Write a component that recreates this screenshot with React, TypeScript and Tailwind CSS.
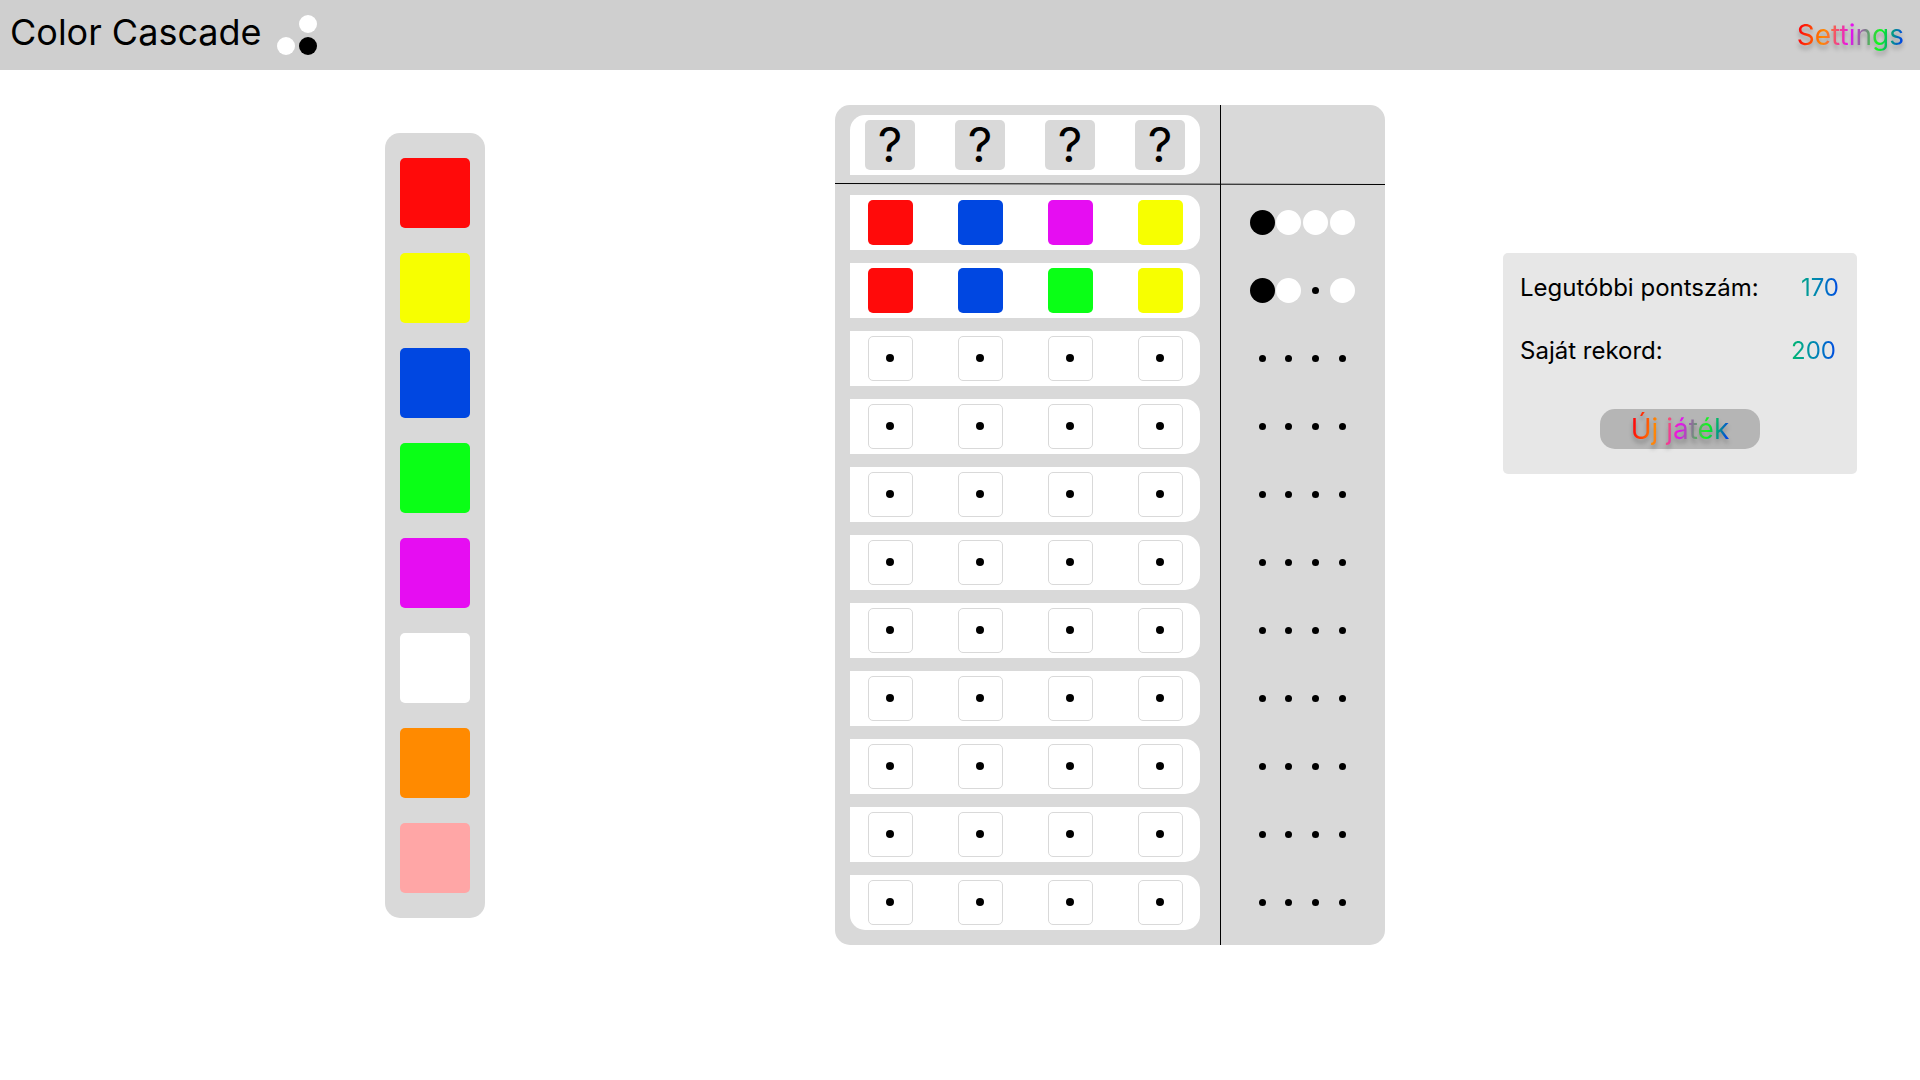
import React from "react";

type ColorName = "red" | "yellow" | "blue" | "green" | "magenta" | "white" | "orange" | "pink";
type Peg = "black" | "white" | "none";

const swatch: Record<ColorName, string> = {
  red: "bg-[#ff0a0a]",
  yellow: "bg-[#f7ff00]",
  blue: "bg-[#0047e1]",
  green: "bg-[#0aff16]",
  magenta: "bg-[#e60df2]",
  white: "bg-white",
  orange: "bg-[#ff8a00]",
  pink: "bg-[#ffa6a6]",
};

const palette: ColorName[] = ["red", "yellow", "blue", "green", "magenta", "white", "orange", "pink"];

const guesses: { colors: ColorName[]; pegs: Peg[] }[] = [
  { colors: ["red", "blue", "magenta", "yellow"], pegs: ["black", "white", "white", "white"] },
  { colors: ["red", "blue", "green", "yellow"], pegs: ["black", "white", "none", "white"] },
];

const ROWS = 11;
const slots = [0, 1, 2, 3];
const rows = Array.from({ length: ROWS }, (_, i) => guesses[i]);

const rainbow =
  "bg-[linear-gradient(100deg,#ff0a0a_5%,#ff8a00_26%,#e60df2_50%,#0aff16_76%,#0047e1_96%)] bg-clip-text text-transparent";

function Logo() {
  return (
    <svg width="40" height="40" viewBox="0 0 40 40" aria-hidden="true">
      <circle cx="31" cy="9" r="9" fill="#fff" />
      <circle cx="9" cy="31" r="9" fill="#fff" />
      <circle cx="31" cy="31" r="9" fill="#000" />
    </svg>
  );
}

function Header() {
  return (
    <header className="flex h-[70px] items-center justify-between bg-[#cfcfcf] pr-4 pl-[10px]">
      <div className="flex items-center gap-[15px]">
        <h1 className="pb-[6px] text-[36px] leading-[44px]">Color Cascade</h1>
        <Logo />
      </div>
      <button className="drop-shadow-[0_4px_2px_rgba(0,0,0,0.25)]">
        <span className={`${rainbow} block text-[28px] leading-9`}>Settings</span>
      </button>
    </header>
  );
}

function Palette() {
  return (
    <div className="flex w-[100px] flex-col items-center gap-[25px] rounded-[15px] bg-[#d9d9d9] py-[25px]">
      {palette.map((c) => (
        <button key={c} aria-label={c} className={`size-[70px] rounded-[5px] ${swatch[c]}`} />
      ))}
    </div>
  );
}

function Guess({ colors, last, row }: { colors?: ColorName[]; last: boolean; row: number }) {
  return (
    <div
      className={`grid h-[55px] w-[350px] grid-cols-[repeat(4,50px)] place-items-center gap-x-10 rounded-r-[15px] bg-white pl-[15px] ${last ? "rounded-bl-[15px]" : ""}`}
    >
      {slots.map((s) =>
        colors ? (
          <div key={s} className={`size-[45px] rounded-[5px] ${swatch[colors[s]]}`} />
        ) : (
          <button
            key={s}
            aria-label={`Row ${row + 1}, slot ${s + 1}`}
            className="flex size-[45px] items-center justify-center rounded-[5px] border border-[#d9d9d9] pb-px"
          >
            <span className="size-2 rounded-full bg-black" />
          </button>
        ),
      )}
    </div>
  );
}

function Feedback({ pegs }: { pegs?: Peg[] }) {
  return (
    <div className="grid h-[55px] grid-cols-[26px_27px_27px_25px] items-center">
      {slots.map((s) => {
        const peg = pegs ? pegs[s] : "none";
        return (
          <span key={s} className="flex size-[25px] items-center justify-center">
            {peg === "none" ? (
              <span className="size-[7px] rounded-full bg-black" />
            ) : (
              <span className={`size-full rounded-full ${peg === "black" ? "bg-black" : "bg-white"}`} />
            )}
          </span>
        );
      })}
    </div>
  );
}

function Board() {
  return (
    <div className="rounded-[15px] bg-[#d9d9d9]">
      <div className="relative grid h-20 grid-cols-[385px_1fr]">
        <div className="pt-[10px] pl-[15px]">
          <div className="grid h-[60px] w-[350px] grid-cols-[repeat(4,50px)] items-center gap-x-10 rounded-r-[15px] rounded-tl-[15px] bg-white pl-[15px]">
            {slots.map((s) => (
              <div
                key={s}
                className="flex size-[50px] items-center justify-center rounded-[5px] bg-[#d9d9d9] text-[48px] leading-[50px]"
              >
                ?
              </div>
            ))}
          </div>
        </div>
        <div className="border-l border-black" />
        <svg
          className="absolute bottom-0 left-0 h-[2px] w-full"
          viewBox="0 0 550 2"
          preserveAspectRatio="none"
          aria-hidden="true"
        >
          <line x1="0" y1="0.5" x2="550" y2="1.5" stroke="#000" />
        </svg>
      </div>
      <div className="grid grid-cols-[385px_1fr]">
        <div className="flex flex-col gap-[13px] pt-[10px] pb-[15px] pl-[15px]">
          {rows.map((r, i) => (
            <Guess key={i} row={i} colors={r?.colors} last={i === ROWS - 1} />
          ))}
        </div>
        <div className="flex flex-col gap-[13px] border-l border-black pt-[10px] pb-[15px] pl-[29px]">
          {rows.map((r, i) => (
            <Feedback key={i} pegs={r?.pegs} />
          ))}
        </div>
      </div>
    </div>
  );
}

function ScoreCard() {
  return (
    <section className="flex w-[354px] flex-col items-center rounded-[5px] bg-[#e7e7e7] pt-5 pb-[25px]">
      <dl className="flex w-full flex-col gap-[33px] pr-[18px] pl-[17px] text-[24px] leading-[30px]">
        <div className="flex justify-between">
          <dt>Legutóbbi pontszám:</dt>
          <dd className="bg-linear-to-r from-[#0fa585] to-[#0047e1] bg-clip-text text-transparent">170</dd>
        </div>
        <div className="flex justify-between pr-[3px]">
          <dt>Saját rekord:</dt>
          <dd className="bg-linear-to-r from-[#08b868] to-[#0047e1] bg-clip-text text-transparent">200</dd>
        </div>
      </dl>
      <button className="mt-[43px] flex h-10 w-40 items-center justify-center rounded-[15px] bg-[#b5b5b5]">
        <span className="drop-shadow-[0_4px_2px_rgba(0,0,0,0.25)]">
          <span className={`${rainbow} block text-[28px] leading-9`}>Új játék</span>
        </span>
      </button>
    </section>
  );
}

export default function App() {
  return (
    <div className="min-h-screen bg-white font-['Inter',sans-serif] text-black">
      <Header />
      <main className="grid grid-cols-[835fr_550px_535fr] items-start pt-[35px]">
        <div className="flex justify-center pt-7 pl-[35px]">
          <Palette />
        </div>
        <Board />
        <div className="flex justify-center pt-[148px] pl-[55px]">
          <ScoreCard />
        </div>
      </main>
    </div>
  );
}
